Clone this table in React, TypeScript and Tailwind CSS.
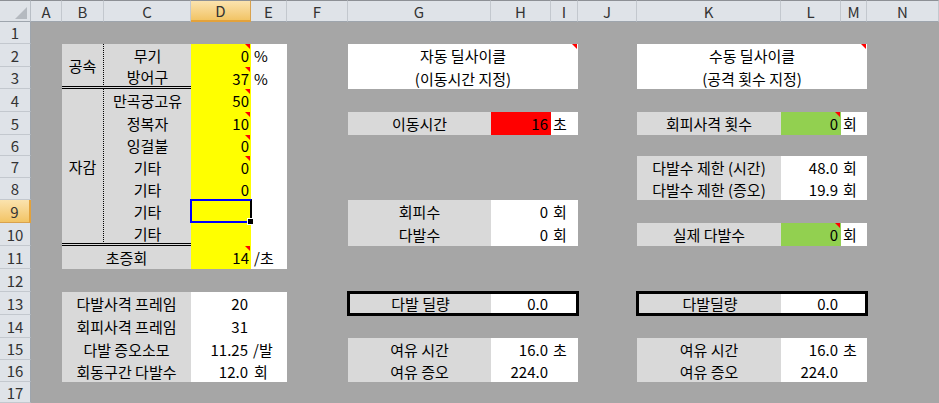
import React from "react";

const Tri = () => (
  <span className="absolute top-0 right-[1px] w-0 h-0 border-l-[5px] border-l-transparent border-t-[5px] border-t-[#ff0000]" />
);

const colHdrs: [string, string][] = [
  ["A", "col-start-2"],
  ["B", "col-start-3"],
  ["C", "col-start-4"],
  ["D", "col-start-5"],
  ["E", "col-start-6"],
  ["F", "col-start-7"],
  ["G", "col-start-8"],
  ["H", "col-start-9"],
  ["I", "col-start-10"],
  ["J", "col-start-11"],
  ["K", "col-start-12"],
  ["L", "col-start-13"],
  ["M", "col-start-14"],
  ["N", "col-start-15"],
];

const rowHdrs: [string, string][] = [
  ["1", "row-start-2"],
  ["2", "row-start-3"],
  ["3", "row-start-4"],
  ["4", "row-start-5"],
  ["5", "row-start-6"],
  ["6", "row-start-7"],
  ["7", "row-start-8"],
  ["8", "row-start-9"],
  ["9", "row-start-10"],
  ["10", "row-start-11"],
  ["11", "row-start-12"],
  ["12", "row-start-13"],
  ["13", "row-start-14"],
  ["14", "row-start-15"],
  ["15", "row-start-16"],
  ["16", "row-start-17"],
  ["17", "row-start-18"],
];

const GRAY = "bg-[#d9d9d9]";

export default function App() {
  return (
    <div className="w-[939px] h-[403px] overflow-hidden bg-[#a6a6a6] font-['Noto_Sans_CJK_KR',sans-serif] text-[15px] leading-none text-black">
      <div className="grid grid-cols-[31px_31px_42px_87px_60px_36px_61px_143px_60px_27px_59px_144px_60px_26px_72px] grid-rows-[22px_22px_23px_22px_23px_23px_21px_22px_22px_23px_23px_23px_23px_23px_23px_22px_22px_21px]">
        {/* corner */}
        <div className="col-start-1 row-start-1 relative bg-[#dfe3e8] border-t border-t-[#8d9095] border-b border-b-[#9ea5ad] border-r border-r-[#b8bec5]">
          <svg className="absolute left-[15px] top-[6px]" width="12" height="12" viewBox="0 0 12 12">
            <polygon points="12,0 12,12 0,12" fill="#b5bac0" />
          </svg>
        </div>
        {colHdrs.map(([l, c]) =>
          l === "D" ? (
            <div
              key={l}
              className={`${c} row-start-1 flex items-center justify-center text-[#333] border-t border-t-[#8d9095] bg-gradient-to-b from-[#fbe3ae] to-[#f2c464] border-b-2 border-b-[#e3a23b] border-r border-r-[#d9a24e]`}
            >
              {l}
            </div>
          ) : (
            <div
              key={l}
              className={`${c} row-start-1 flex items-center justify-center text-[#333] bg-[#dfe3e8] border-t border-t-[#8d9095] border-b border-b-[#9ea5ad] border-r border-r-[#c3c8ce]`}
            >
              {l}
            </div>
          )
        )}
        {rowHdrs.map(([l, r]) =>
          l === "9" ? (
            <div
              key={l}
              className={`col-start-1 ${r} flex items-center justify-center text-[#333] bg-gradient-to-b from-[#fbe3ae] to-[#f2c464] border-b border-b-[#d9a24e] border-r-2 border-r-[#e3a23b]`}
            >
              {l}
            </div>
          ) : (
            <div
              key={l}
              className={`col-start-1 ${r} flex items-center justify-center text-[#333] bg-[#dfe3e8] border-b border-b-[#c3c8ce] border-r border-r-[#9ea5ad]`}
            >
              {l}
            </div>
          )
        )}

        {/* ===== Left block ===== */}
        <div className={`col-start-3 row-start-3 row-span-2 ${GRAY} flex items-center justify-center border-r border-r-black [border-right-style:dotted] border-b-[3px] border-b-black [border-bottom-style:double]`}>
          공속
        </div>
        <div className={`col-start-4 row-start-3 ${GRAY} flex items-center justify-center`}>무기</div>
        <div className={`col-start-4 row-start-4 ${GRAY} flex items-center justify-center border-b-[3px] border-b-black [border-bottom-style:double]`}>
          방어구
        </div>
        <div className={`col-start-3 row-start-5 row-span-7 ${GRAY} flex items-center justify-center border-r border-r-black [border-right-style:dotted] border-b-[3px] border-b-black [border-bottom-style:double]`}>
          자감
        </div>
        <div className={`col-start-4 row-start-5 ${GRAY} flex items-center justify-center`}>만곡궁고유</div>
        <div className={`col-start-4 row-start-6 ${GRAY} flex items-center justify-center`}>정복자</div>
        <div className={`col-start-4 row-start-7 ${GRAY} flex items-center justify-center`}>잉걸불</div>
        <div className={`col-start-4 row-start-8 ${GRAY} flex items-center justify-center`}>기타</div>
        <div className={`col-start-4 row-start-9 ${GRAY} flex items-center justify-center`}>기타</div>
        <div className={`col-start-4 row-start-10 ${GRAY} flex items-center justify-center`}>기타</div>
        <div className={`col-start-4 row-start-11 ${GRAY} flex items-center justify-center border-b-[3px] border-b-black [border-bottom-style:double]`}>
          기타
        </div>
        <div className={`col-start-3 col-span-2 row-start-12 ${GRAY} flex items-center justify-center`}>초증회</div>

        <div className="col-start-5 row-start-3 relative bg-[#ffff00] flex items-center justify-end pr-[2px]">0<Tri /></div>
        <div className="col-start-5 row-start-4 relative bg-[#ffff00] flex items-center justify-end pr-[2px]">37<Tri /></div>
        <div className="col-start-5 row-start-5 relative bg-[#ffff00] flex items-center justify-end pr-[2px]">50<Tri /></div>
        <div className="col-start-5 row-start-6 relative bg-[#ffff00] flex items-center justify-end pr-[2px]">10<Tri /></div>
        <div className="col-start-5 row-start-7 relative bg-[#ffff00] flex items-center justify-end pr-[2px]">0<Tri /></div>
        <div className="col-start-5 row-start-8 relative bg-[#ffff00] flex items-center justify-end pr-[2px]">0<Tri /></div>
        <div className="col-start-5 row-start-9 relative bg-[#ffff00] flex items-center justify-end pr-[2px]">0</div>
        <div className="col-start-5 row-start-10 relative bg-[#ffff00]">
          <div className="absolute -left-px -top-px -right-px bottom-0 border-2 border-[#0000ff] border-r-black">
            <span className="absolute -right-[4px] -bottom-[4px] w-[7px] h-[7px] bg-black border border-white" />
          </div>
        </div>
        <div className="col-start-5 row-start-11 bg-[#ffff00]" />
        <div className="col-start-5 row-start-12 relative bg-[#ffff00] flex items-center justify-end pr-[2px]">14<Tri /></div>

        <div className="col-start-6 row-start-3 row-span-10 bg-white" />
        <div className="col-start-6 row-start-3 flex items-center pl-[3px]">%</div>
        <div className="col-start-6 row-start-4 flex items-center pl-[3px]">%</div>
        <div className="col-start-6 row-start-12 flex items-center pl-[3px]">/초</div>

        {/* bottom-left block */}
        <div className={`col-start-3 col-span-2 row-start-14 ${GRAY} flex items-center justify-center`}>다발사격 프레임</div>
        <div className={`col-start-3 col-span-2 row-start-15 ${GRAY} flex items-center justify-center`}>회피사격 프레임</div>
        <div className={`col-start-3 col-span-2 row-start-16 ${GRAY} flex items-center justify-center`}>다발 증오소모</div>
        <div className={`col-start-3 col-span-2 row-start-17 ${GRAY} flex items-center justify-center`}>회동구간 다발수</div>
        <div className="col-start-5 col-span-2 row-start-14 row-span-4 bg-white" />
        <div className="col-start-5 row-start-14 flex items-center justify-end pr-[3px]">20</div>
        <div className="col-start-5 row-start-15 flex items-center justify-end pr-[3px]">31</div>
        <div className="col-start-5 row-start-16 flex items-center justify-end pr-[3px]">11.25</div>
        <div className="col-start-6 row-start-16 flex items-center pl-[2px]">/발</div>
        <div className="col-start-5 row-start-17 flex items-center justify-end pr-[3px]">12.0</div>
        <div className="col-start-6 row-start-17 flex items-center pl-[3px]">회</div>

        {/* ===== Middle block ===== */}
        <div className="col-start-8 col-span-3 row-start-3 row-span-2 relative bg-white flex flex-col">
          <div className="h-[23px] flex items-center justify-center">자동 딜사이클</div>
          <div className="h-[22px] flex items-center justify-center">(이동시간 지정)</div>
          <Tri />
        </div>

        <div className={`col-start-8 row-start-6 ${GRAY} flex items-center justify-center`}>이동시간</div>
        <div className="col-start-9 row-start-6 bg-[#ff0000] flex items-center justify-end pr-[3px]">16</div>
        <div className="col-start-10 row-start-6 bg-white flex items-center pl-[2px]">초</div>

        <div className={`col-start-8 row-start-10 ${GRAY} flex items-center justify-center`}>회피수</div>
        <div className="col-start-9 row-start-10 bg-white flex items-center justify-end pr-[3px]">0</div>
        <div className="col-start-10 row-start-10 bg-white flex items-center pl-[2px]">회</div>
        <div className={`col-start-8 row-start-11 ${GRAY} flex items-center justify-center`}>다발수</div>
        <div className="col-start-9 row-start-11 bg-white flex items-center justify-end pr-[3px]">0</div>
        <div className="col-start-10 row-start-11 bg-white flex items-center pl-[2px]">회</div>

        <div className="col-start-8 col-span-3 row-start-14 -m-px border-[3px] border-black flex bg-white">
          <div className={`w-[141px] ${GRAY} flex items-center justify-center`}>다발 딜량</div>
          <div className="w-[60px] flex items-center justify-end pr-[3px]">0.0</div>
        </div>

        <div className={`col-start-8 row-start-16 ${GRAY} flex items-center justify-center`}>여유 시간</div>
        <div className={`col-start-8 row-start-17 ${GRAY} flex items-center justify-center`}>여유 증오</div>
        <div className="col-start-9 col-span-2 row-start-16 row-span-2 bg-white" />
        <div className="col-start-9 row-start-16 flex items-center justify-end pr-[3px]">16.0</div>
        <div className="col-start-10 row-start-16 flex items-center pl-[2px]">초</div>
        <div className="col-start-9 row-start-17 flex items-center justify-end pr-[3px]">224.0</div>

        {/* ===== Right block ===== */}
        <div className="col-start-12 col-span-3 row-start-3 row-span-2 relative bg-white flex flex-col">
          <div className="h-[23px] flex items-center justify-center">수동 딜사이클</div>
          <div className="h-[22px] flex items-center justify-center">(공격 횟수 지정)</div>
          <Tri />
        </div>

        <div className={`col-start-12 row-start-6 ${GRAY} flex items-center justify-center`}>회피사격 횟수</div>
        <div className="col-start-13 row-start-6 relative bg-[#92d050] flex items-center justify-end pr-[3px]">0<Tri /></div>
        <div className="col-start-14 row-start-6 bg-white flex items-center pl-[2px]">회</div>

        <div className={`col-start-12 row-start-8 ${GRAY} flex items-center justify-center`}>다발수 제한 (시간)</div>
        <div className={`col-start-12 row-start-9 ${GRAY} flex items-center justify-center`}>다발수 제한 (증오)</div>
        <div className="col-start-13 col-span-2 row-start-8 row-span-2 bg-white" />
        <div className="col-start-13 row-start-8 flex items-center justify-end pr-[3px]">48.0</div>
        <div className="col-start-14 row-start-8 flex items-center pl-[2px]">회</div>
        <div className="col-start-13 row-start-9 flex items-center justify-end pr-[3px]">19.9</div>
        <div className="col-start-14 row-start-9 flex items-center pl-[2px]">회</div>

        <div className={`col-start-12 row-start-11 ${GRAY} flex items-center justify-center`}>실제 다발수</div>
        <div className="col-start-13 row-start-11 relative bg-[#92d050] flex items-center justify-end pr-[3px]">0<Tri /></div>
        <div className="col-start-14 row-start-11 bg-white flex items-center pl-[2px]">회</div>

        <div className="col-start-12 col-span-3 row-start-14 -m-px border-[3px] border-black flex bg-white">
          <div className={`w-[142px] ${GRAY} flex items-center justify-center`}>다발딜량</div>
          <div className="w-[60px] flex items-center justify-end pr-[3px]">0.0</div>
        </div>

        <div className={`col-start-12 row-start-16 ${GRAY} flex items-center justify-center`}>여유 시간</div>
        <div className={`col-start-12 row-start-17 ${GRAY} flex items-center justify-center`}>여유 증오</div>
        <div className="col-start-13 col-span-2 row-start-16 row-span-2 bg-white" />
        <div className="col-start-13 row-start-16 flex items-center justify-end pr-[3px]">16.0</div>
        <div className="col-start-14 row-start-16 flex items-center pl-[2px]">초</div>
        <div className="col-start-13 row-start-17 flex items-center justify-end pr-[3px]">224.0</div>
      </div>
    </div>
  );
}
